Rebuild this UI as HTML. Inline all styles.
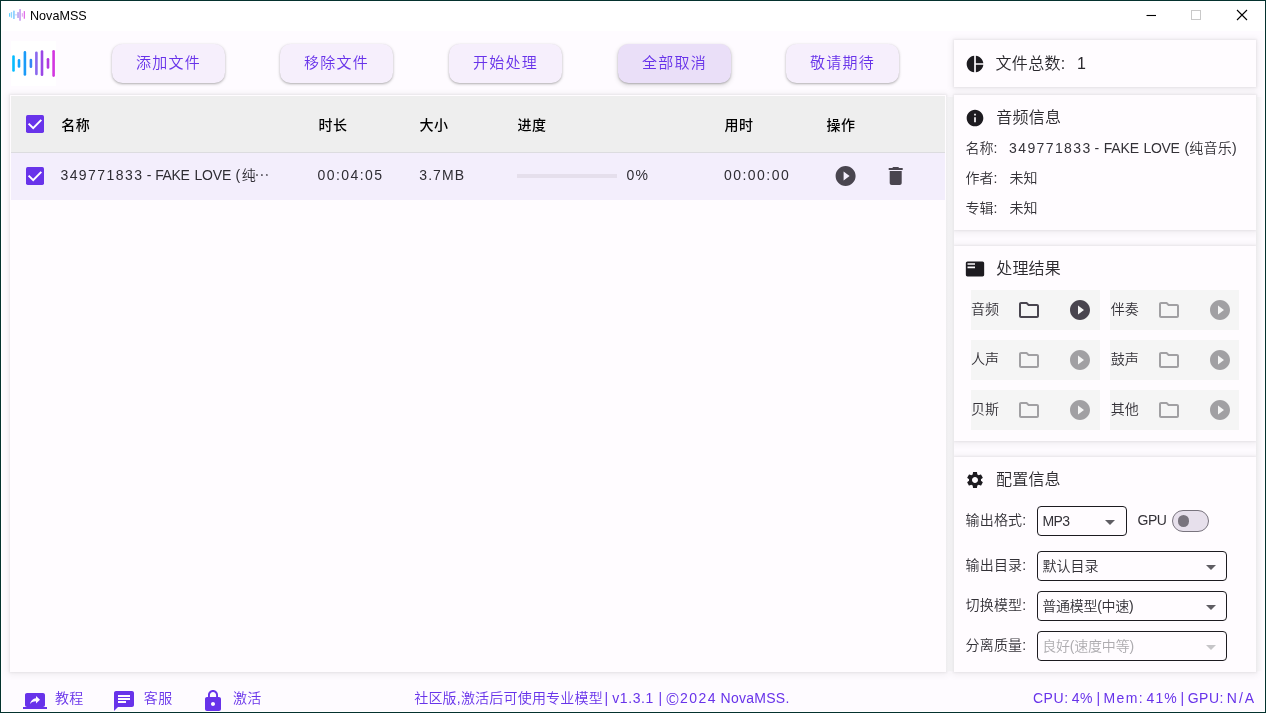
<!DOCTYPE html>
<html lang="zh-CN">
<head>
<meta charset="utf-8">
<title>NovaMSS</title>
<style>
*{box-sizing:border-box;margin:0;padding:0}
html,body{width:1266px;height:713px;overflow:hidden;background:#fff}
body{font-family:"Liberation Sans","Noto Sans CJK SC",sans-serif;color:#1d1b20;position:relative;font-weight:350}
#win{position:absolute;left:0;top:0;width:1266px;height:713px;background:#fefbff;overflow:hidden;will-change:transform}
#frame{position:absolute;left:0;top:0;width:1266px;height:713px;border:1px solid #04322e;z-index:50;pointer-events:none}
#frame2{position:absolute;left:1px;top:1px;width:1264px;height:711px;border:1px solid #fff;z-index:49;pointer-events:none}
#titlebar{position:absolute;left:1px;top:1px;width:1264px;height:30px;background:#fff}
.abs{position:absolute}
.t{position:absolute;white-space:nowrap;line-height:20px;height:20px}
.btn{position:absolute;top:44px;width:113px;height:39px;border-radius:10.500px;background:#f6effc;box-shadow:0 1px 2px rgba(0,0,0,.22),0 1px 3px 1px rgba(0,0,0,.08);color:#6833ea;font-size:15px;letter-spacing:1.300px;text-align:center;line-height:38px}
.btn.hov{background:#eadff8;box-shadow:0 1px 2px rgba(0,0,0,.25),0 2px 4px 1px rgba(0,0,0,.10)}
.card{position:absolute;background:#fffcff;box-shadow:0 0 2px 1px rgba(0,0,0,.06),0 1px 7px 2px rgba(0,0,0,.055)}
.h16{font-size:16px;color:#2a282d;letter-spacing:.2px}
.l14{font-size:14px;color:#333137}
.cell{position:absolute;width:129px;height:40px;background:#f5f5f5}
.dd{position:absolute;left:1037px;width:190px;height:30px;border:1px solid #1d1b20;border-radius:4px;background:#fffcff}
.pp{color:#6833ea;font-size:14px}
.hd{font-size:14px;font-weight:500;color:#000;letter-spacing:.4px}
.rw{font-size:14px;color:#2e2c33}
</style>
</head>
<body>
<div id="win">
  <div id="titlebar"></div>
  <!-- title icon -->
  <svg class="abs" style="left:8px;top:7px" width="18" height="16" viewBox="8 7 18 16">
    <rect x="9.1" y="12.9" width="1.1" height="3.9" rx=".5" fill="#4fcbff"/>
    <rect x="10.9" y="11.9" width="1.2" height="5.9" rx=".5" fill="#7fd0ff" opacity=".9"/>
    <rect x="13" y="10.6" width="1.8" height="8.4" rx=".6" fill="#86cdff" opacity=".9"/>
    <rect x="14.5" y="14.4" width="3" height=".9" fill="#a9c4f7" opacity=".8"/>
    <rect x="17.1" y="11.9" width="1.9" height="6.1" rx=".6" fill="#bba8ef" opacity=".9"/>
    <rect x="19.2" y="8.9" width="1.7" height="11.9" rx=".6" fill="#c79ff1"/>
    <rect x="21.8" y="12.9" width="1.1" height="3.9" rx=".5" fill="#dc97ee" opacity=".9"/>
    <rect x="23.7" y="10.9" width="1.3" height="7.9" rx=".5" fill="#e16fe9"/>
  </svg>
  <!-- window controls -->
  <svg class="abs" style="left:1140px;top:5px" width="115" height="22" viewBox="1140 5 115 22">
    <path d="M1146.5 15.5h9.5" stroke="#000" stroke-width="1.1" fill="none"/>
    <rect x="1191.5" y="10.5" width="9" height="9" stroke="#c9c9c9" stroke-width="1" fill="none"/>
    <path d="M1237 10l10 10M1247 10l-10 10" stroke="#000" stroke-width="1.1" fill="none"/>
  </svg>

  <!-- logo -->
  <div class="abs" style="left:11px;top:41px;width:45px;height:45px;background:#fff"></div>
  <svg class="abs" style="left:11px;top:41px" width="45" height="45" viewBox="11 41 45 45">
    <g stroke-linecap="round" stroke-width="2.6" fill="none">
      <path d="M13.5 56.6v13.8" stroke="#06bcff"/>
      <path d="M19 60.4v6" stroke="#14a6ff"/>
      <path d="M24.9 52.4v22" stroke="#1a9bf8"/>
      <path d="M30.9 60.1v6.6" stroke="#3587f6"/>
      <path d="M36.4 52.8v21.2" stroke="#8a68ee"/>
      <path d="M42 51.6v23.2" stroke="#9a47e6"/>
      <path d="M48 59.3v8.2" stroke="#b237e1"/>
      <path d="M53.6 51.2v24.4" stroke="#d336e0"/>
    </g>
  </svg>

  <!-- toolbar buttons -->
  <div class="btn" style="left:112px">添加文件</div>
  <div class="btn" style="left:280px">移除文件</div>
  <div class="btn" style="left:449px">开始处理</div>
  <div class="btn hov" style="left:618px">全部取消</div>
  <div class="btn" style="left:786px">敬请期待</div>

  <!-- table card -->
  <div class="card" style="left:10px;top:95px;width:936px;height:577px;background:#fffcff"></div>
  <div class="abs" style="left:11px;top:96px;width:934px;height:56px;background:#eeeeee"></div>
  <div class="abs" style="left:11px;top:152px;width:934px;height:48px;background:#f3eefc;border-top:1px solid #dcdcdf"></div>

  <!-- header -->
  <svg class="abs" style="left:26px;top:115px" width="18" height="18" viewBox="0 0 18 18"><rect width="18" height="18" rx="1.700" fill="#6833ea"/><path d="M2.600 8.600l4.600 4.600 8.100-8.300" stroke="#fff" stroke-width="2" fill="none"/></svg>
  <div class="t hd" style="left:61.300px;top:115px">名称</div>
  <div class="t hd" style="left:318.5px;top:115px">时长</div>
  <div class="t hd" style="left:419.5px;top:115px">大小</div>
  <div class="t hd" style="left:517.5px;top:115px">进度</div>
  <div class="t hd" style="left:724.5px;top:115px">用时</div>
  <div class="t hd" style="left:826.5px;top:115px">操作</div>
  <!-- row -->
  <svg class="abs" style="left:26px;top:167px" width="18" height="18" viewBox="0 0 18 18"><rect width="18" height="18" rx="1.700" fill="#6833ea"/><path d="M2.600 8.600l4.600 4.600 8.100-8.300" stroke="#fff" stroke-width="2" fill="none"/></svg>
  <div class="t rw" id="rn1" style="left:60.394px;top:165px;letter-spacing:1.456px">349771833</div>
  <div class="t rw" id="rn2" style="left:146.856px;top:165px;letter-spacing:0.000px">-</div>
  <div class="t rw" id="rn3" style="left:155.196px;top:165px;letter-spacing:-0.353px">FAKE</div>
  <div class="t rw" id="rn4" style="left:194.412px;top:165px;letter-spacing:-0.129px">LOVE</div>
  <div class="t rw" id="rn5" style="left:235.58px;top:165px;letter-spacing:1.55px">(纯</div>
  <div class="t rw" id="rn6" style="left:254.6px;top:165px;letter-spacing:0.000px;font-size:14.800px;font-family:'Noto Sans CJK SC',sans-serif">…</div>
  <div class="t rw" id="r_dur" style="left:317.496px;top:165px;letter-spacing:1.436px">00:04:05</div>
  <div class="t rw" id="r_size" style="left:419.350px;top:165px;letter-spacing:1.050px">3.7MB</div>
  <div class="abs" style="left:517px;top:174px;width:100px;height:4px;background:#e5dfec"></div>
  <div class="t rw" id="r_pct" style="left:626.451px;top:165px;letter-spacing:1.220px">0%</div>
  <div class="t rw" id="r_time" style="left:723.992px;top:165px;letter-spacing:1.456px">00:00:00</div>
  <svg class="abs" style="left:834px;top:164px" width="24" height="24" viewBox="0.400 0.100 24 24"><path fill="#49454f" d="M12 2C6.48 2 2 6.48 2 12s4.48 10 10 10 10-4.480 10-10S17.52 2 12 2zm-2 14.500v-9l6 4.500-6 4.500z"/></svg>
  <svg class="abs" style="left:884px;top:164px" width="24" height="24" viewBox="0.300 0 24 24"><path fill="#49454f" d="M6 19c0 1.100.9 2 2 2h8c1.100 0 2-.9 2-2V7H6v12zM19 4h-3.500l-1-1h-5l-1 1H5v2h14V4z"/></svg>

  <!-- card 1 -->
  <div class="card" style="left:954px;top:40px;width:302px;height:47px"></div>
  <svg class="abs" style="left:965.100px;top:53.850px" width="20" height="20" viewBox="0 0 24 24"><path fill="#1d1b20" d="M11 2v20c-5.070-.5-9-4.790-9-10s3.930-9.500 9-10zm2.030 0v8.990H22c-.47-4.740-4.240-8.520-8.970-8.990zm0 11.010V22c4.740-.47 8.500-4.250 8.970-8.990h-8.970z"/></svg>
  <div class="t h16" id="c1t" style="left:995.582px;top:54px;letter-spacing:0.279px">文件总数:</div>
  <div class="t h16" id="c1n" style="left:1076.976px;top:54px;letter-spacing:0.000px">1</div>
  <!-- card 2 -->
  <div class="card" style="left:954px;top:95px;width:302px;height:135px"></div>
  <svg class="abs" style="left:965.100px;top:107.900px" width="20" height="20" viewBox="0 0 24 24"><path fill="#1d1b20" d="M12 2C6.48 2 2 6.48 2 12s4.48 10 10 10 10-4.480 10-10S17.520 2 12 2zm1 15h-2v-6h2v6zm0-8h-2V7h2v2z"/></svg>
  <div class="t h16" style="left:996.300px;top:108.200px">音频信息</div>
  <div class="t l14" style="left:965.600px;top:138px">名称:</div>
  <div class="t l14" id="cv1" style="left:1009.030px;top:138px;letter-spacing:1.395px">349771833</div>
  <div class="t l14" id="cv2" style="left:1094.569px;top:138px;letter-spacing:0.000px">-</div>
  <div class="t l14" id="cv3" style="left:1103.754px;top:138px;letter-spacing:-0.179px">FAKE</div>
  <div class="t l14" id="cv4" style="left:1143.386px;top:138px;letter-spacing:-0.263px">LOVE</div>
  <div class="t l14" id="cv5" style="left:1184.388px;top:138px;letter-spacing:0.254px">(纯音乐)</div>
  <div class="t l14" style="left:965.600px;top:168px">作者:</div>
  <div class="t l14" style="left:1009.500px;top:168px">未知</div>
  <div class="t l14" style="left:965.600px;top:198px">专辑:</div>
  <div class="t l14" style="left:1009.500px;top:198px">未知</div>
  <!-- card 3 -->
  <div class="card" style="left:954px;top:246px;width:302px;height:195px"></div>
  <svg class="abs" style="left:964.900px;top:258.900px" width="20" height="20" viewBox="0 0 24 24"><path fill="#1d1b20" d="M21 3H3c-1.100 0-2 .9-2 2v14c0 1.100.9 2 2 2h18c1.100 0 2-.9 2-2V5c0-1.100-.9-2-2-2zm-9 8H3V9h9v2zm0-4H3V5h9v2z"/></svg>
  <div class="t h16" style="left:996.200px;top:259px">处理结果</div>
  <div class="cell" style="left:970.5px;top:290px"></div>
  <div class="t l14" style="left:970.9px;top:299px">音频</div>
  <svg class="abs" style="left:1017.2px;top:297.8px" width="24" height="24" viewBox="0 0 24 24"><path fill="#49454f" d="M9.17 6l2 2H20v10H4V6h5.170M10 4H4c-1.100 0-1.990.9-1.990 2L2 18c0 1.100.9 2 2 2h16c1.100 0 2-.9 2-2V8c0-1.100-.9-2-2-2h-8l-2-2z"/></svg>
  <svg class="abs" style="left:1067.8px;top:297.8px" width="24" height="24" viewBox="0 0 24 24"><path fill="#49454f" d="M12 2C6.48 2 2 6.48 2 12s4.48 10 10 10 10-4.480 10-10S17.52 2 12 2zm-2 14.500v-9l6 4.500-6 4.500z"/></svg>
  <div class="cell" style="left:1110.3px;top:290px"></div>
  <div class="t l14" style="left:1110.7px;top:299px">伴奏</div>
  <svg class="abs" style="left:1157.0px;top:297.8px" width="24" height="24" viewBox="0 0 24 24"><path fill="#a1a0a3" d="M9.17 6l2 2H20v10H4V6h5.170M10 4H4c-1.100 0-1.990.9-1.990 2L2 18c0 1.100.9 2 2 2h16c1.100 0 2-.9 2-2V8c0-1.100-.9-2-2-2h-8l-2-2z"/></svg>
  <svg class="abs" style="left:1207.6px;top:297.8px" width="24" height="24" viewBox="0 0 24 24"><path fill="#a1a0a3" d="M12 2C6.48 2 2 6.48 2 12s4.48 10 10 10 10-4.480 10-10S17.52 2 12 2zm-2 14.500v-9l6 4.500-6 4.500z"/></svg>
  <div class="cell" style="left:970.5px;top:340px"></div>
  <div class="t l14" style="left:970.9px;top:349px">人声</div>
  <svg class="abs" style="left:1017.2px;top:347.8px" width="24" height="24" viewBox="0 0 24 24"><path fill="#a1a0a3" d="M9.17 6l2 2H20v10H4V6h5.170M10 4H4c-1.100 0-1.990.9-1.990 2L2 18c0 1.100.9 2 2 2h16c1.100 0 2-.9 2-2V8c0-1.100-.9-2-2-2h-8l-2-2z"/></svg>
  <svg class="abs" style="left:1067.8px;top:347.8px" width="24" height="24" viewBox="0 0 24 24"><path fill="#a1a0a3" d="M12 2C6.48 2 2 6.48 2 12s4.48 10 10 10 10-4.480 10-10S17.52 2 12 2zm-2 14.500v-9l6 4.500-6 4.500z"/></svg>
  <div class="cell" style="left:1110.3px;top:340px"></div>
  <div class="t l14" style="left:1110.7px;top:349px">鼓声</div>
  <svg class="abs" style="left:1157.0px;top:347.8px" width="24" height="24" viewBox="0 0 24 24"><path fill="#a1a0a3" d="M9.17 6l2 2H20v10H4V6h5.170M10 4H4c-1.100 0-1.990.9-1.990 2L2 18c0 1.100.9 2 2 2h16c1.100 0 2-.9 2-2V8c0-1.100-.9-2-2-2h-8l-2-2z"/></svg>
  <svg class="abs" style="left:1207.6px;top:347.8px" width="24" height="24" viewBox="0 0 24 24"><path fill="#a1a0a3" d="M12 2C6.48 2 2 6.48 2 12s4.48 10 10 10 10-4.480 10-10S17.52 2 12 2zm-2 14.500v-9l6 4.500-6 4.500z"/></svg>
  <div class="cell" style="left:970.5px;top:390px"></div>
  <div class="t l14" style="left:970.9px;top:399px">贝斯</div>
  <svg class="abs" style="left:1017.2px;top:397.8px" width="24" height="24" viewBox="0 0 24 24"><path fill="#a1a0a3" d="M9.17 6l2 2H20v10H4V6h5.170M10 4H4c-1.100 0-1.990.9-1.990 2L2 18c0 1.100.9 2 2 2h16c1.100 0 2-.9 2-2V8c0-1.100-.9-2-2-2h-8l-2-2z"/></svg>
  <svg class="abs" style="left:1067.8px;top:397.8px" width="24" height="24" viewBox="0 0 24 24"><path fill="#a1a0a3" d="M12 2C6.48 2 2 6.48 2 12s4.48 10 10 10 10-4.480 10-10S17.52 2 12 2zm-2 14.500v-9l6 4.500-6 4.500z"/></svg>
  <div class="cell" style="left:1110.3px;top:390px"></div>
  <div class="t l14" style="left:1110.7px;top:399px">其他</div>
  <svg class="abs" style="left:1157.0px;top:397.8px" width="24" height="24" viewBox="0 0 24 24"><path fill="#a1a0a3" d="M9.17 6l2 2H20v10H4V6h5.170M10 4H4c-1.100 0-1.990.9-1.990 2L2 18c0 1.100.9 2 2 2h16c1.100 0 2-.9 2-2V8c0-1.100-.9-2-2-2h-8l-2-2z"/></svg>
  <svg class="abs" style="left:1207.6px;top:397.8px" width="24" height="24" viewBox="0 0 24 24"><path fill="#a1a0a3" d="M12 2C6.48 2 2 6.48 2 12s4.48 10 10 10 10-4.480 10-10S17.52 2 12 2zm-2 14.500v-9l6 4.500-6 4.500z"/></svg>

  <!-- card 4 -->
  <div class="card" style="left:954px;top:457px;width:302px;height:215px"></div>
  <svg class="abs" style="left:965.100px;top:470px" width="20" height="20" viewBox="0 0 24 24"><path fill="#1d1b20" d="M19.140 12.940c.040-.3.060-.610.060-.940 0-.320-.020-.640-.070-.940l2.030-1.580c.180-.140.230-.410.120-.610l-1.920-3.320c-.120-.220-.370-.290-.590-.220l-2.390.96c-.5-.380-1.030-.7-1.620-.94l-.36-2.540c-.040-.240-.240-.410-.480-.410h-3.840c-.240 0-.430.170-.470.410l-.36 2.540c-.59.240-1.130.570-1.620.94l-2.390-.96c-.220-.080-.470 0-.590.220L2.740 8.870c-.120.210-.080.470.12.610l2.030 1.580c-.050.3-.090.630-.090.940s.020.640.070.940l-2.030 1.580c-.180.140-.230.410-.120.610l1.920 3.320c.120.220.370.290.590.220l2.390-.96c.5.380 1.030.7 1.620.94l.36 2.540c.050.240.240.410.480.410h3.840c.240 0 .440-.170.470-.410l.36-2.540c.59-.240 1.130-.560 1.620-.94l2.390.96c.220.080.470 0 .590-.220l1.920-3.320c.120-.220.070-.470-.120-.610l-2.010-1.580zM12 15.600c-1.980 0-3.600-1.620-3.600-3.600s1.620-3.600 3.600-3.600 3.600 1.620 3.600 3.600-1.620 3.600-3.600 3.600z"/></svg>
  <div class="t h16" style="left:996px;top:470.200px">配置信息</div>

  <div class="t l14" style="left:965.600px;top:510px;letter-spacing:.150px">输出格式:</div>
  <div class="dd" style="top:506px;width:90px"></div>
  <div class="t l14" style="left:1042.500px;top:511px;letter-spacing:-.600px">MP3</div>
  <svg class="abs" style="left:1105px;top:520px" width="10" height="5" viewBox="0 0 10 5"><path d="M0 0l5 5 5-5z" fill="#5f5d63"/></svg>
  <div class="t l14" style="left:1137.500px;top:510.200px;letter-spacing:-.500px">GPU</div>
  <div class="abs" style="left:1172.300px;top:509.900px;width:36.500px;height:22px;border-radius:11px;border:1.400px solid #79747e;background:#e7e0ec"></div>
  <div class="abs" style="left:1177.700px;top:515.300px;width:11.300px;height:11.300px;border-radius:50%;background:#79747e"></div>

  <div class="t l14" style="left:965.600px;top:555px;letter-spacing:.150px">输出目录:</div>
  <div class="dd" style="top:551px"></div>
  <div class="t l14" style="left:1042.500px;top:556px">默认目录</div>
  <svg class="abs" style="left:1205.500px;top:564.700px" width="10" height="5" viewBox="0 0 10 5"><path d="M0 0l5 5 5-5z" fill="#5f5d63"/></svg>

  <div class="t l14" style="left:965.600px;top:595px;letter-spacing:.150px">切换模型:</div>
  <div class="dd" style="top:591px"></div>
  <div class="t l14" style="left:1042.200px;top:596px;letter-spacing:-.250px">普通模型(中速)</div>
  <svg class="abs" style="left:1205.500px;top:604.700px" width="10" height="5" viewBox="0 0 10 5"><path d="M0 0l5 5 5-5z" fill="#5f5d63"/></svg>

  <div class="t l14" style="left:965.600px;top:635px;letter-spacing:.150px">分离质量:</div>
  <div class="dd" style="top:631px"></div>
  <div class="t l14" style="left:1042.200px;top:636px;color:#aeacb0;letter-spacing:-.200px">良好(速度中等)</div>
  <svg class="abs" style="left:1205.500px;top:644.700px" width="10" height="5" viewBox="0 0 10 5"><path d="M0 0l5 5 5-5z" fill="#c6c5c8"/></svg>

  <div class="abs" style="left:946px;top:97px;width:8px;height:574px;background:linear-gradient(to right,#eeedef 0,#f2f1f3 30%,#f1f0f2 70%,#e9e8ea 100%)"></div>
  <div class="abs" style="left:1256px;top:97px;width:7px;height:574px;background:linear-gradient(to right,#ebeaec 0,#f3f2f4 35%,#fbf8fc 80%,#fefbff 100%)"></div>
  <!-- status bar -->
  <svg class="abs" style="left:23px;top:689px" width="24" height="24" viewBox="0 0 24 24"><path fill="#6833ea" d="M20 18c1.100 0 1.990-.9 1.990-2L22 6c0-1.110-.9-2-2-2H4c-1.110 0-2 .89-2 2v10c0 1.100.89 2 2 2H0v2h24v-2h-4zm-7-3.530v-2.190c-2.780 0-4.610.85-6 2.720.56-2.670 2.110-5.330 6-5.870V7l4 3.730-4 3.740z"/></svg>
  <div class="t pp" id="bl1" style="left:54.933px;top:688px;letter-spacing:0.320px">教程</div>
  <svg class="abs" style="left:112px;top:689px" width="24" height="24" viewBox="0 0 24 24"><path fill="#6833ea" d="M20 2H4c-1.100 0-1.990.9-1.990 2L2 22l4-4h14c1.100 0 2-.9 2-2V4c0-1.100-.9-2-2-2zM6 9h12v2H6V9zm8 5H6v-2h8v2zm4-6H6V6h12v2z"/></svg>
  <div class="t pp" id="bl2" style="left:143.860px;top:688px;letter-spacing:0.469px">客服</div>
  <svg class="abs" style="left:201px;top:689px" width="24" height="24" viewBox="0 0 24 24"><path fill="#6833ea" d="M18 8h-1V6c0-2.760-2.240-5-5-5S7 3.240 7 6v2H6c-1.100 0-2 .9-2 2v10c0 1.100.9 2 2 2h12c1.100 0 2-.9 2-2V10c0-1.100-.9-2-2-2zm-6 9c-1.100 0-2-.9-2-2s.9-2 2-2 2 .9 2 2-.9 2-2 2zm3.100-9H8.900V6c0-1.710 1.390-3.100 3.100-3.100 1.710 0 3.100 1.390 3.100 3.100v2z"/></svg>
  <div class="t pp" id="bl3" style="left:232.926px;top:688px;letter-spacing:0.274px">激活</div>
  <div class="t pp" id="sm1" style="left:414.211px;top:688px;letter-spacing:0.203px">社区版,激活后可使用专业模型</div>
  <div class="t pp" id="sm2" style="left:604.6px;top:688px;letter-spacing:0.000px">|</div>
  <div class="t pp" id="sm3" style="left:612.272px;top:688px;letter-spacing:0.574px">v1.3.1</div>
  <div class="t pp" id="sm4" style="left:658.550px;top:688px;letter-spacing:0.000px">|</div>
  <div class="t pp" id="sm5" style="left:665.8px;top:688px;letter-spacing:0.000px;font-size:16.300px;font-family:'Noto Sans CJK SC',sans-serif">©</div>
  <div class="t pp" id="sm6" style="left:680.038px;top:688px;letter-spacing:1.482px">2024</div>
  <div class="t pp" id="sm7" style="left:720.550px;top:688px;letter-spacing:0.264px">NovaMSS.</div>
  <div class="t pp" id="sr1" style="left:1032.885px;top:688px;letter-spacing:0.604px">CPU:</div>
  <div class="t pp" id="sr2" style="left:1071.801px;top:688px;letter-spacing:0.458px">4%</div>
  <div class="t pp" id="sr3" style="left:1096.570px;top:688px;letter-spacing:0.000px">|</div>
  <div class="t pp" id="sr4" style="left:1103.590px;top:688px;letter-spacing:1.336px">Mem:</div>
  <div class="t pp" id="sr5" style="left:1146.615px;top:688px;letter-spacing:1.032px">41%</div>
  <div class="t pp" id="sr6" style="left:1180.550px;top:688px;letter-spacing:0.000px">|</div>
  <div class="t pp" id="sr7" style="left:1187.753px;top:688px;letter-spacing:0.470px">GPU:</div>
  <div class="t pp" id="sr8" style="left:1226.857px;top:688px;letter-spacing:1.945px">N/A</div>
</div>
<div class="t" style="left:30px;top:6px;font-size:12.600px;color:#000;z-index:5">NovaMSS</div>
<div id="frame2"></div>
<div id="frame"></div>
</body>
</html>
